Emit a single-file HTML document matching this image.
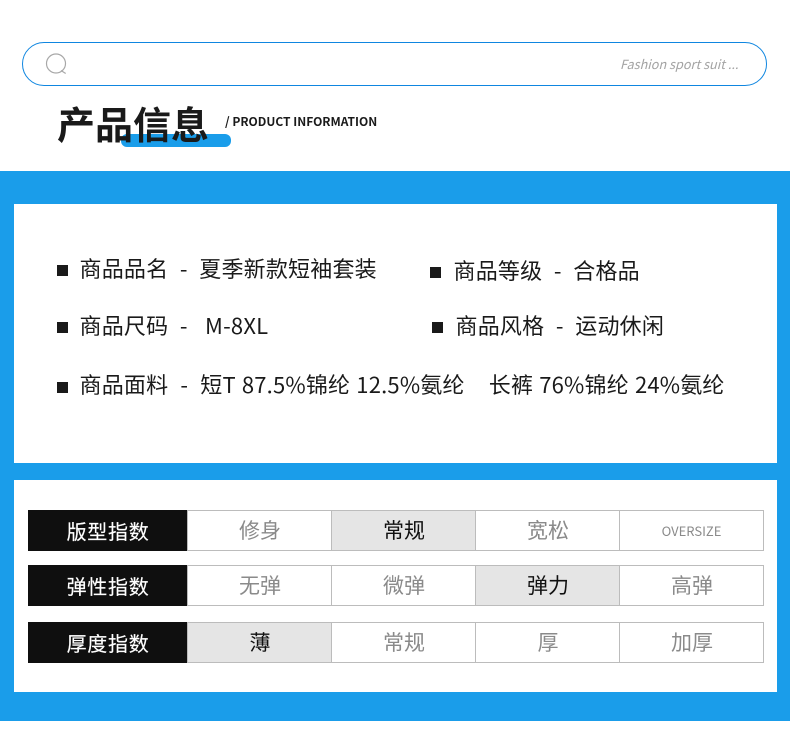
<!DOCTYPE html>
<html lang="zh">
<head>
<meta charset="utf-8">
<style>
html,body{margin:0;padding:0;background:#fff}
body{width:790px;height:737px;position:relative;overflow:hidden;font-family:"Noto Sans CJK SC","Liberation Sans",sans-serif}
.a{position:absolute;white-space:nowrap}
.band{left:0;top:171px;width:790px;height:550px;background:#1a9dea}
.panel{left:14px;width:763px;background:#fff}
.line{font-size:22px;line-height:30px;color:#1a1a1a;white-space:pre;letter-spacing:.2px;word-spacing:.65px}
.sq{width:11px;height:11px;background:#1a1a1a}
.bk{left:28px;width:159px;height:41px;background:#0f0f0f;color:#fff;font-size:20px;line-height:41px;text-align:center;letter-spacing:.7px;text-indent:1px;-webkit-text-stroke:.15px #fff}
.c{height:39px;border:1px solid #bcbcbc;box-sizing:content-box;font-size:21px;line-height:39px;text-align:center;text-indent:1px;color:#8a8a8a;background:#fff}
.on{background:#e5e5e5;color:#111}
</style>
</head>
<body>
<div class="a" style="left:22px;top:42px;width:743px;height:42px;border:1px solid #0f86e0;border-radius:22px;background:#fff"></div>
<svg class="a" style="left:44px;top:52px" width="24" height="26" viewBox="0 0 24 26">
<circle cx="12" cy="11.500" r="9.500" fill="none" stroke="#a8a8a8" stroke-width="1.200"/>
<path d="M17 18.500L21.700 21.500" fill="none" stroke="#a8a8a8" stroke-width="1.200"/>
</svg>
<div class="a" style="left:620px;top:55px;font-size:12.700px;line-height:18px;font-style:italic;color:#a3a3a3">Fashion sport suit ...</div>

<div class="a" style="left:121px;top:134px;width:110px;height:13px;border-radius:6px;background:#1a9dea"></div>
<div class="a" style="left:57px;top:96px;font-size:38px;line-height:54px;font-weight:700;color:#1a1a1a">产品信息</div>
<div class="a" style="left:225px;top:113px;font-size:12px;line-height:18px;font-weight:700;color:#1a1a1a">/ PRODUCT INFORMATION</div>

<div class="a band"></div>
<div class="a panel" style="top:204px;height:259px"></div>
<div class="a panel" style="top:480px;height:212px"></div>

<div class="a sq" style="left:57px;top:265px"></div>
<div class="a line" style="left:79.500px;top:253px">商品品名  -  夏季新款短袖套装</div>
<div class="a sq" style="left:430px;top:267px"></div>
<div class="a line" style="left:453.500px;top:255px">商品等级  -  合格品</div>
<div class="a sq" style="left:57px;top:322px"></div>
<div class="a line" style="left:79.500px;top:310px">商品尺码  -   M-8XL</div>
<div class="a sq" style="left:432px;top:322px"></div>
<div class="a line" style="left:455.500px;top:310px">商品风格  -  运动休闲</div>
<div class="a sq" style="left:57px;top:382px"></div>
<div class="a line" style="left:79.500px;top:369px;word-spacing:.9px">商品面料  -  短T 87.5%锦纶 12.5%氨纶    长裤 76%锦纶 24%氨纶</div>

<div class="a bk" style="top:510px">版型指数</div>
<div class="a c" style="left:187px;top:510px;width:143px">修身</div>
<div class="a c on" style="left:331px;top:510px;width:143px">常规</div>
<div class="a c" style="left:475px;top:510px;width:143px">宽松</div>
<div class="a c" style="left:619px;top:510px;width:143px;font-size:13px;text-indent:0">OVERSIZE</div>

<div class="a bk" style="top:565px">弹性指数</div>
<div class="a c" style="left:187px;top:565px;width:143px">无弹</div>
<div class="a c" style="left:331px;top:565px;width:143px">微弹</div>
<div class="a c on" style="left:475px;top:565px;width:143px">弹力</div>
<div class="a c" style="left:619px;top:565px;width:143px">高弹</div>

<div class="a bk" style="top:622px">厚度指数</div>
<div class="a c on" style="left:187px;top:622px;width:143px">薄</div>
<div class="a c" style="left:331px;top:622px;width:143px">常规</div>
<div class="a c" style="left:475px;top:622px;width:143px">厚</div>
<div class="a c" style="left:619px;top:622px;width:143px">加厚</div>
</body>
</html>
